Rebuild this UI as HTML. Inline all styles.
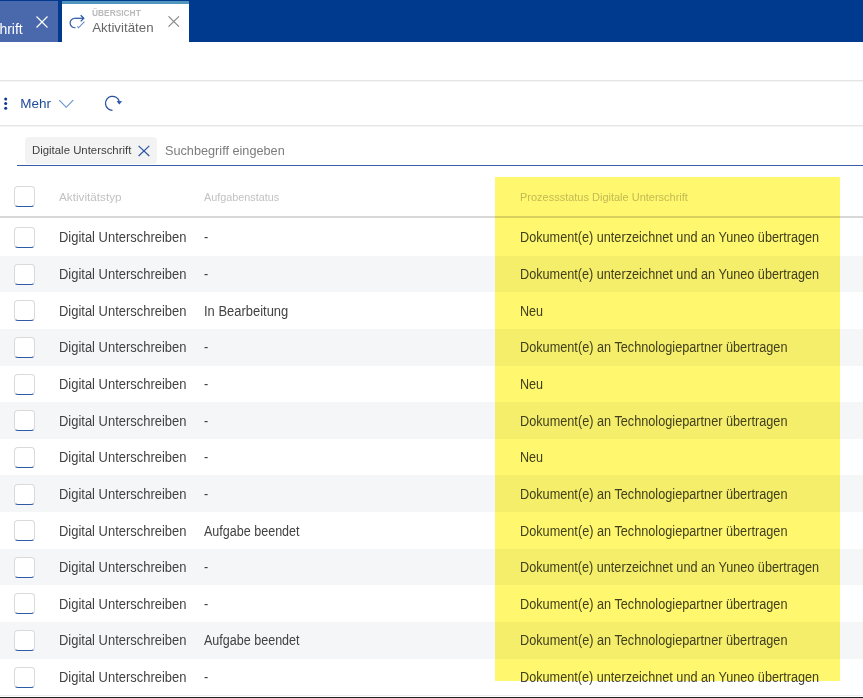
<!DOCTYPE html>
<html><head><meta charset="utf-8">
<style>
*{box-sizing:border-box;margin:0;padding:0}
html,body{width:863px;height:698px;overflow:hidden;background:#fff;font-family:"Liberation Sans",sans-serif;position:relative}
.a{position:absolute;white-space:nowrap}
.tx{position:absolute;white-space:nowrap;line-height:1;transform-origin:0 0}
.cb{position:absolute;left:14px;width:21px;height:21px;border:1px solid #dadada;border-bottom:1.6px solid #2f5aa8;border-radius:4px;background:#fff}
.row{position:absolute;left:0;width:863px;height:36.64px}
.row.g{background:#f5f6f8}
#yel{left:495px;top:177px;width:345.3px;height:503.7px;background:#fff76e;mix-blend-mode:multiply}
</style></head><body>
<div class="a" style="left:0;top:0;width:863px;height:41.6px;background:#003a8f"></div>
<div class="a" style="left:0;top:1.3px;width:58px;height:40.3px;background:#4a69ad;overflow:hidden">
  <span class="tx" style="left:-0.6px;top:21.05px;font-size:14px;color:#fff;transform:scaleX(1.0);">hrift</span>
</div>
<svg class="a" style="left:36px;top:15.5px" width="12" height="12" viewBox="0 0 12 12"><path d="M0.5 0.5L11.5 11.5M11.5 0.5L0.5 11.5" stroke="#fff" stroke-width="1.2" fill="none"/></svg>
<div class="a" style="left:61.7px;top:0.8px;width:127.1px;height:41.2px;background:#fff;border-top:3.5px solid #5096be"></div>
<svg class="a" style="left:66px;top:12px" width="22" height="19" viewBox="66 12 22 19">
  <path d="M74.2 18.3H83.6" stroke="#2f5aa8" stroke-width="1.3" fill="none"/>
  <path d="M80.7 15.2L83.8 18.3L80.7 21.4" stroke="#2f5aa8" stroke-width="1.3" fill="none"/>
  <path d="M74.2 18.3A4.7 4.7 0 0 0 75.5 27.7" stroke="#2f5aa8" stroke-width="1.2" fill="none"/>
  <path d="M77.4 26.2L78.6 27.8L84.4 21.6" stroke="#5f85c4" stroke-width="1.05" fill="none"/>
</svg>
<span class="tx" style="left:92px;top:8.90px;font-size:8.8px;color:#bababa;transform:scaleX(0.95);font-weight:bold;">ÜBERSICHT</span>
<span class="tx" style="left:92.2px;top:21.34px;font-size:13.3px;color:#676767;transform:scaleX(1.0);">Aktivitäten</span>
<svg class="a" style="left:168px;top:16px" width="12" height="11" viewBox="0 0 12 11"><path d="M0.5 0.3L11 10.7M11 0.3L0.5 10.7" stroke="#8a8a8a" stroke-width="1.1" fill="none"/></svg>

<div class="a" style="left:0;top:80px;width:863px;height:1.4px;background:#e5e5e5"></div><div class="a" style="left:0;top:81.4px;width:863px;height:1px;background:#f6f6f6"></div>
<svg class="a" style="left:0;top:94px" width="12" height="18" viewBox="0 94 12 18"><circle cx="5.7" cy="99" r="1.5" fill="#0b3a8c"/><circle cx="5.7" cy="103.6" r="1.5" fill="#0b3a8c"/><circle cx="5.7" cy="108.2" r="1.5" fill="#0b3a8c"/></svg>
<span class="tx" style="left:20.2px;top:96.77px;font-size:13.5px;color:#1f4a9a;transform:scaleX(1.0);">Mehr</span>
<svg class="a" style="left:58px;top:98px" width="17" height="11" viewBox="58 98 17 11"><path d="M59.3 100.2L66.2 107.3L73.2 100.2" stroke="#5e8fd4" stroke-width="1.1" fill="none"/></svg>
<svg class="a" style="left:102px;top:93px" width="23" height="20" viewBox="102 93 23 20">
  <path d="M112.5 110.3A7 7 0 1 1 119.2 101.2" stroke="#24509f" stroke-width="1.25" fill="none"/>
  <path d="M116.6 101L122.2 101.2L119.2 104.6Z" fill="#2a55a5"/>
</svg>
<div class="a" style="left:0;top:124.6px;width:863px;height:1.4px;background:#e5e5e5"></div><div class="a" style="left:0;top:126px;width:863px;height:1px;background:#f6f6f6"></div>

<div class="a" style="left:24.8px;top:137px;width:132.2px;height:26.7px;background:#f3f3f3;border-radius:4px"></div>
<span class="tx" style="left:31.9px;top:145.29px;font-size:11px;color:#404040;transform:scaleX(1.035);">Digitale Unterschrift</span>
<svg class="a" style="left:137px;top:145px" width="14" height="12" viewBox="137 145 14 12"><path d="M138.6 145.9L149.3 156M149.3 145.9L138.6 156" stroke="#2f5aa8" stroke-width="1.3" fill="none"/></svg>
<span class="tx" style="left:165.1px;top:143.97px;font-size:13.5px;color:#7c7c7c;transform:scaleX(0.94);">Suchbegriff eingeben</span>
<div class="a" style="left:17px;top:164.5px;width:846px;height:1.6px;background:#3a5ca8"></div>

<div class="cb" style="top:185.8px"></div>
<span class="tx" style="left:59px;top:192.27px;font-size:11.5px;color:#c2c2c2;transform:scaleX(1.02);">Aktivitätstyp</span>
<span class="tx" style="left:203.5px;top:192.27px;font-size:11.5px;color:#c2c2c2;transform:scaleX(0.94);">Aufgabenstatus</span>
<span class="tx" style="left:520px;top:192.27px;font-size:11.5px;color:#c2c2c2;transform:scaleX(0.955);">Prozessstatus Digitale Unterschrift</span>
<div class="a" style="left:0;top:216.3px;width:863px;height:1.7px;background:#d8d8d8"></div>

<div class="row" style="top:219.000px"><div class="cb" style="top:8.1px"></div><span class="tx" style="left:58.5px;top:11.40px;font-size:14px;color:#424242;transform:scaleX(0.925);">Digital Unterschreiben</span><span class="tx" style="left:203.9px;top:11.40px;font-size:14px;color:#424242;transform:scaleX(0.9);">-</span><span class="tx" style="left:520.3px;top:11.40px;font-size:14px;color:#424242;transform:scaleX(0.905);">Dokument(e) unterzeichnet und an Yuneo übertragen</span></div>
<div class="row g" style="top:255.640px"><div class="cb" style="top:8.1px"></div><span class="tx" style="left:58.5px;top:11.40px;font-size:14px;color:#424242;transform:scaleX(0.925);">Digital Unterschreiben</span><span class="tx" style="left:203.9px;top:11.40px;font-size:14px;color:#424242;transform:scaleX(0.9);">-</span><span class="tx" style="left:520.3px;top:11.40px;font-size:14px;color:#424242;transform:scaleX(0.905);">Dokument(e) unterzeichnet und an Yuneo übertragen</span></div>
<div class="row" style="top:292.280px"><div class="cb" style="top:8.1px"></div><span class="tx" style="left:58.5px;top:11.40px;font-size:14px;color:#424242;transform:scaleX(0.925);">Digital Unterschreiben</span><span class="tx" style="left:203.9px;top:11.40px;font-size:14px;color:#424242;transform:scaleX(0.925);">In Bearbeitung</span><span class="tx" style="left:520.3px;top:11.40px;font-size:14px;color:#424242;transform:scaleX(0.9);">Neu</span></div>
<div class="row g" style="top:328.920px"><div class="cb" style="top:8.1px"></div><span class="tx" style="left:58.5px;top:11.40px;font-size:14px;color:#424242;transform:scaleX(0.925);">Digital Unterschreiben</span><span class="tx" style="left:203.9px;top:11.40px;font-size:14px;color:#424242;transform:scaleX(0.9);">-</span><span class="tx" style="left:520.3px;top:11.40px;font-size:14px;color:#424242;transform:scaleX(0.9075);">Dokument(e) an Technologiepartner übertragen</span></div>
<div class="row" style="top:365.560px"><div class="cb" style="top:8.1px"></div><span class="tx" style="left:58.5px;top:11.40px;font-size:14px;color:#424242;transform:scaleX(0.925);">Digital Unterschreiben</span><span class="tx" style="left:203.9px;top:11.40px;font-size:14px;color:#424242;transform:scaleX(0.9);">-</span><span class="tx" style="left:520.3px;top:11.40px;font-size:14px;color:#424242;transform:scaleX(0.9);">Neu</span></div>
<div class="row g" style="top:402.200px"><div class="cb" style="top:8.1px"></div><span class="tx" style="left:58.5px;top:11.40px;font-size:14px;color:#424242;transform:scaleX(0.925);">Digital Unterschreiben</span><span class="tx" style="left:203.9px;top:11.40px;font-size:14px;color:#424242;transform:scaleX(0.9);">-</span><span class="tx" style="left:520.3px;top:11.40px;font-size:14px;color:#424242;transform:scaleX(0.9075);">Dokument(e) an Technologiepartner übertragen</span></div>
<div class="row" style="top:438.840px"><div class="cb" style="top:8.1px"></div><span class="tx" style="left:58.5px;top:11.40px;font-size:14px;color:#424242;transform:scaleX(0.925);">Digital Unterschreiben</span><span class="tx" style="left:203.9px;top:11.40px;font-size:14px;color:#424242;transform:scaleX(0.9);">-</span><span class="tx" style="left:520.3px;top:11.40px;font-size:14px;color:#424242;transform:scaleX(0.9);">Neu</span></div>
<div class="row g" style="top:475.480px"><div class="cb" style="top:8.1px"></div><span class="tx" style="left:58.5px;top:11.40px;font-size:14px;color:#424242;transform:scaleX(0.925);">Digital Unterschreiben</span><span class="tx" style="left:203.9px;top:11.40px;font-size:14px;color:#424242;transform:scaleX(0.9);">-</span><span class="tx" style="left:520.3px;top:11.40px;font-size:14px;color:#424242;transform:scaleX(0.9075);">Dokument(e) an Technologiepartner übertragen</span></div>
<div class="row" style="top:512.120px"><div class="cb" style="top:8.1px"></div><span class="tx" style="left:58.5px;top:11.40px;font-size:14px;color:#424242;transform:scaleX(0.925);">Digital Unterschreiben</span><span class="tx" style="left:203.9px;top:11.40px;font-size:14px;color:#424242;transform:scaleX(0.896);">Aufgabe beendet</span><span class="tx" style="left:520.3px;top:11.40px;font-size:14px;color:#424242;transform:scaleX(0.9075);">Dokument(e) an Technologiepartner übertragen</span></div>
<div class="row g" style="top:548.760px"><div class="cb" style="top:8.1px"></div><span class="tx" style="left:58.5px;top:11.40px;font-size:14px;color:#424242;transform:scaleX(0.925);">Digital Unterschreiben</span><span class="tx" style="left:203.9px;top:11.40px;font-size:14px;color:#424242;transform:scaleX(0.9);">-</span><span class="tx" style="left:520.3px;top:11.40px;font-size:14px;color:#424242;transform:scaleX(0.905);">Dokument(e) unterzeichnet und an Yuneo übertragen</span></div>
<div class="row" style="top:585.400px"><div class="cb" style="top:8.1px"></div><span class="tx" style="left:58.5px;top:11.40px;font-size:14px;color:#424242;transform:scaleX(0.925);">Digital Unterschreiben</span><span class="tx" style="left:203.9px;top:11.40px;font-size:14px;color:#424242;transform:scaleX(0.9);">-</span><span class="tx" style="left:520.3px;top:11.40px;font-size:14px;color:#424242;transform:scaleX(0.9075);">Dokument(e) an Technologiepartner übertragen</span></div>
<div class="row g" style="top:622.040px"><div class="cb" style="top:8.1px"></div><span class="tx" style="left:58.5px;top:11.40px;font-size:14px;color:#424242;transform:scaleX(0.925);">Digital Unterschreiben</span><span class="tx" style="left:203.9px;top:11.40px;font-size:14px;color:#424242;transform:scaleX(0.896);">Aufgabe beendet</span><span class="tx" style="left:520.3px;top:11.40px;font-size:14px;color:#424242;transform:scaleX(0.9075);">Dokument(e) an Technologiepartner übertragen</span></div>
<div class="row" style="top:658.680px"><div class="cb" style="top:8.1px"></div><span class="tx" style="left:58.5px;top:11.40px;font-size:14px;color:#424242;transform:scaleX(0.925);">Digital Unterschreiben</span><span class="tx" style="left:203.9px;top:11.40px;font-size:14px;color:#424242;transform:scaleX(0.9);">-</span><span class="tx" style="left:520.3px;top:11.40px;font-size:14px;color:#424242;transform:scaleX(0.905);">Dokument(e) unterzeichnet und an Yuneo übertragen</span></div>

<div id="yel" class="a"></div>
<div class="a" style="left:0;top:694.5px;width:863px;height:1px;background:#eee"></div>
<div class="a" style="left:0;top:696.8px;width:863px;height:2px;background:#222"></div>
</body></html>
